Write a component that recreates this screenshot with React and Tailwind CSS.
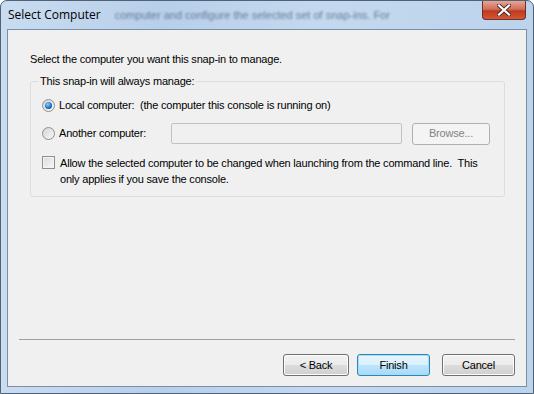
const font = { fontFamily: '"Liberation Sans", Arial, sans-serif' };

const Radio = ({ checked }) => (
  <span className="w-[13px] h-[13px] rounded-full border border-[#8e8f8f] bg-gradient-to-br from-[#d5d5d5] to-[#f8f8f8] flex items-center justify-center shrink-0">
    {checked && (
      <span className="w-[7px] h-[7px] rounded-full bg-[radial-gradient(circle_at_40%_35%,#8fd4ff,#1a67b8_60%,#0e3f7a)]" />
    )}
  </span>
);

const Button = ({ children, focused, disabled, className = '' }) => (
  <div
    className={`h-[22px] rounded-[3px] border flex items-center justify-center text-[11px] ${
      disabled
        ? 'border-[#adb2b5] bg-[#f4f4f4] text-[#838383]'
        : focused
        ? 'border-[#3c7fb1] bg-[linear-gradient(#eaf6fd_0%,#d9f0fc_50%,#bee6fd_50%,#a7d9f5_100%)] text-black shadow-[inset_0_0_0_1px_#97e5fb]'
        : 'border-[#707070] bg-[linear-gradient(#f2f2f2_0%,#ebebeb_50%,#dddddd_50%,#cfcfcf_100%)] text-black shadow-[inset_0_0_0_1px_#fcfcfc]'
    } ${className}`}
  >
    {children}
  </div>
);

const App = () => {
  return (
    <div className="w-[534px] h-[394px] bg-white" style={font}>
      <div className="w-full h-full rounded-t-[7px] border border-[#4f6277] bg-[linear-gradient(90deg,#c9dcf0_0%,#b8cfea_30%,#c4d9ef_60%,#bcd3ec_100%)] flex flex-col">
        <div className="h-[28px] flex items-start justify-between pl-[7px] pr-[7px]">
          <div className="flex items-center h-[27px] gap-[14px]">
            <span className="text-[12px] text-black" style={{ fontFamily: '"Open Sans", "Liberation Sans", sans-serif' }}>
              Select Computer
            </span>
            <span className="text-[11px] text-[#3d5374] blur-[1.2px] opacity-70 mt-[2px]">
              computer and configure the selected set of snap-ins. For
            </span>
          </div>
          <div className="w-[44px] h-[19px] rounded-b-[4px] border border-t-0 border-[#6e3128] bg-[linear-gradient(#e8a493_0%,#d2705a_45%,#c0391f_55%,#d0583a_100%)] flex items-center justify-center">
            <svg width="14" height="12" viewBox="0 0 14 12">
              <path d="M2 1.5 L12 10.5 M12 1.5 L2 10.5" stroke="#4a2a24" strokeWidth="4" strokeLinecap="square" />
              <path d="M2 1.5 L12 10.5 M12 1.5 L2 10.5" stroke="#ffffff" strokeWidth="2.2" strokeLinecap="square" />
            </svg>
          </div>
        </div>
        <div className="flex-1 mx-[6px] mb-[6px] border border-[#7a8ea6] bg-[#f0f0f0] flex flex-col text-[11px] tracking-[-0.2px] text-black">
          <div className="pl-[22px] pt-[21px] h-[45px]">Select the computer you want this snap-in to manage.</div>

          <fieldset className="ml-[22px] w-[474px] h-[122px] border border-[#d5dfe5] rounded-[3px] pl-[11px] pr-[14px]">
            <legend className="px-[2px] -ml-[4px] leading-[13px]">This snap-in will always manage:</legend>
            <div className="flex items-center gap-[4px] mt-[9px] h-[16px]">
              <Radio checked />
              <span>Local computer:&nbsp; (the computer this console is running on)</span>
            </div>
            <div className="flex items-center mt-[10px] h-[21px]">
              <div className="flex items-center gap-[4px] w-[129px]">
                <Radio />
                <span>Another computer:</span>
              </div>
              <div className="w-[231px] h-[21px] border border-[#c2c2c2] rounded-[2px] bg-[#f0f0f0]" />
              <Button disabled className="ml-[10px] w-[78px] h-[21px]">Browse...</Button>
            </div>
            <div className="flex items-start gap-[5px] mt-[11px]">
              <span className="mt-[1px] w-[13px] h-[13px] border border-[#8e8f8f] bg-gradient-to-br from-[#dcdcdc] to-[#f6f6f6] shadow-[inset_0_0_0_1px_#f4f4f4] shrink-0" />
              <span className="leading-[16px] whitespace-nowrap">
                Allow the selected computer to be changed when launching from the command line.&nbsp; This
                <br />
                only applies if you save the console.
              </span>
            </div>
          </fieldset>

          <div className="flex-1" />
          <div className="mx-[11px] border-t border-[#a0a0a0]" />
          <div className="flex justify-end items-center pr-[11px] pt-[14px] pb-[10px]">
            <Button className="w-[66px]">&lt; Back</Button>
            <Button focused className="w-[73px] ml-[8px]">Finish</Button>
            <Button className="w-[73px] ml-[12px]">Cancel</Button>
          </div>
        </div>
      </div>
    </div>
  );
};

export default App;
